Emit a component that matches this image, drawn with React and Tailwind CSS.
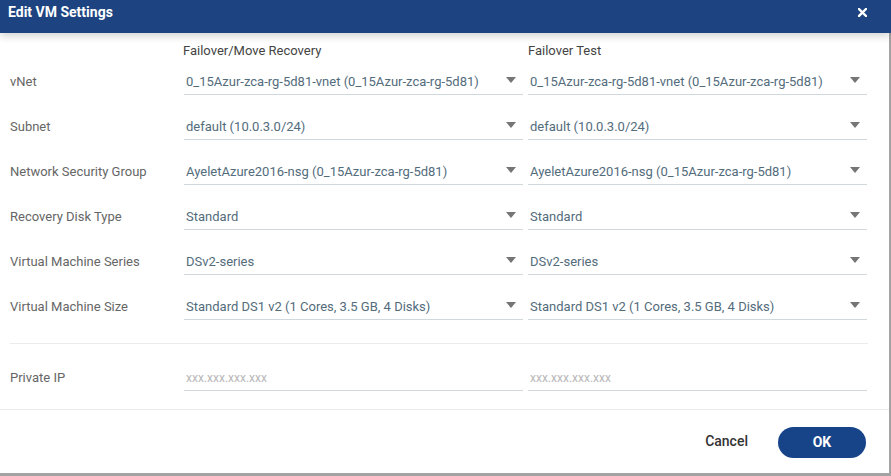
import React from 'react';

const rows = [
  { label: 'vNet', a: '0_15Azur-zca-rg-5d81-vnet (0_15Azur-zca-rg-5d81)', b: '0_15Azur-zca-rg-5d81-vnet (0_15Azur-zca-rg-5d81)' },
  { label: 'Subnet', a: 'default (10.0.3.0/24)', b: 'default (10.0.3.0/24)' },
  { label: 'Network Security Group', a: 'AyeletAzure2016-nsg (0_15Azur-zca-rg-5d81)', b: 'AyeletAzure2016-nsg (0_15Azur-zca-rg-5d81)' },
  { label: 'Recovery Disk Type', a: 'Standard', b: 'Standard' },
  { label: 'Virtual Machine Series', a: 'DSv2-series', b: 'DSv2-series' },
  { label: 'Virtual Machine Size', a: 'Standard DS1 v2 (1 Cores, 3.5 GB, 4 Disks)', b: 'Standard DS1 v2 (1 Cores, 3.5 GB, 4 Disks)' },
];

const Select = ({ value }) => (
  <div className="h-[29px] flex items-center justify-between border-b border-[#cfd8dc] pl-[2px] pr-[7px] pt-[3px]">
    <span className="text-[13px] text-[#536c7c] truncate">{value}</span>
    <svg width="10" height="6" viewBox="0 0 10 6" className="flex-shrink-0 -mt-[3px]">
      <path d="M0 0 L10 0 L5 6 Z" fill="#757575" />
    </svg>
  </div>
);

const IpInput = () => (
  <div className="h-[29px] flex items-center border-b border-[#cfd8dc] pl-[2px] pt-[3px]">
    <span className="text-[12px] text-[#b8b8b8]">xxx.xxx.xxx.xxx</span>
  </div>
);

export default function App() {
  return (
    <div className="h-screen bg-[#a3a3a3] overflow-hidden" style={{ fontFamily: 'Roboto, "Liberation Sans", sans-serif' }}>
      <div className="w-[889px] h-[473px] bg-white flex flex-col relative">
        {/* Header */}
        <div className="h-[33px] w-[891px] bg-[#1d4381] flex items-start justify-between pl-2 pr-[24px] pt-[2px] shadow-[0_3px_8px_rgba(0,0,0,0.18)] relative z-10">
          <h1 className="text-[14px] font-bold text-white leading-5">Edit VM Settings</h1>
          <button className="mt-[6px]">
            <svg width="9" height="9" viewBox="0 0 9 9">
              <path d="M1 1 L8 8 M8 1 L1 8" stroke="white" strokeWidth="2.4" strokeLinecap="square" />
            </svg>
          </button>
        </div>

        {/* Body */}
        <div className="flex-1 pl-[10px] pr-[21px]">
          <div className="grid grid-cols-[169px_339px_339px] gap-x-[5px] pt-[10px]">
            <div />
            <div className="text-[13px] text-[#444] leading-4 -ml-[1px]">Failover/Move Recovery</div>
            <div className="text-[13px] text-[#444] leading-4">Failover Test</div>
          </div>
          <div className="grid grid-cols-[169px_339px_339px] gap-x-[5px] gap-y-[16px] mt-[7px]">
            {rows.map((r) => (
              <React.Fragment key={r.label}>
                <div className="h-[29px] flex items-center pt-[3px] text-[13px] text-[#666]">{r.label}</div>
                <Select value={r.a} />
                <Select value={r.b} />
              </React.Fragment>
            ))}
          </div>
          <div className="border-t border-[#ececec] mt-[23px]" />
          <div className="grid grid-cols-[169px_339px_339px] gap-x-[5px] mt-[18px]">
            <div className="h-[29px] flex items-center pt-[3px] text-[13px] text-[#666]">Private IP</div>
            <IpInput />
            <IpInput />
          </div>
        </div>

        {/* Footer */}
        <div className="h-[64px] border-t border-[#ececec] flex items-center justify-end pr-[23px] pt-[1px]">
          <button className="text-[14px] font-medium text-[#333] mr-[30px] -mt-[2px]">Cancel</button>
          <button className="w-[88px] h-[31px] rounded-full bg-[#174489] text-white text-[14px] font-bold">OK</button>
        </div>
      </div>
    </div>
  );
}
